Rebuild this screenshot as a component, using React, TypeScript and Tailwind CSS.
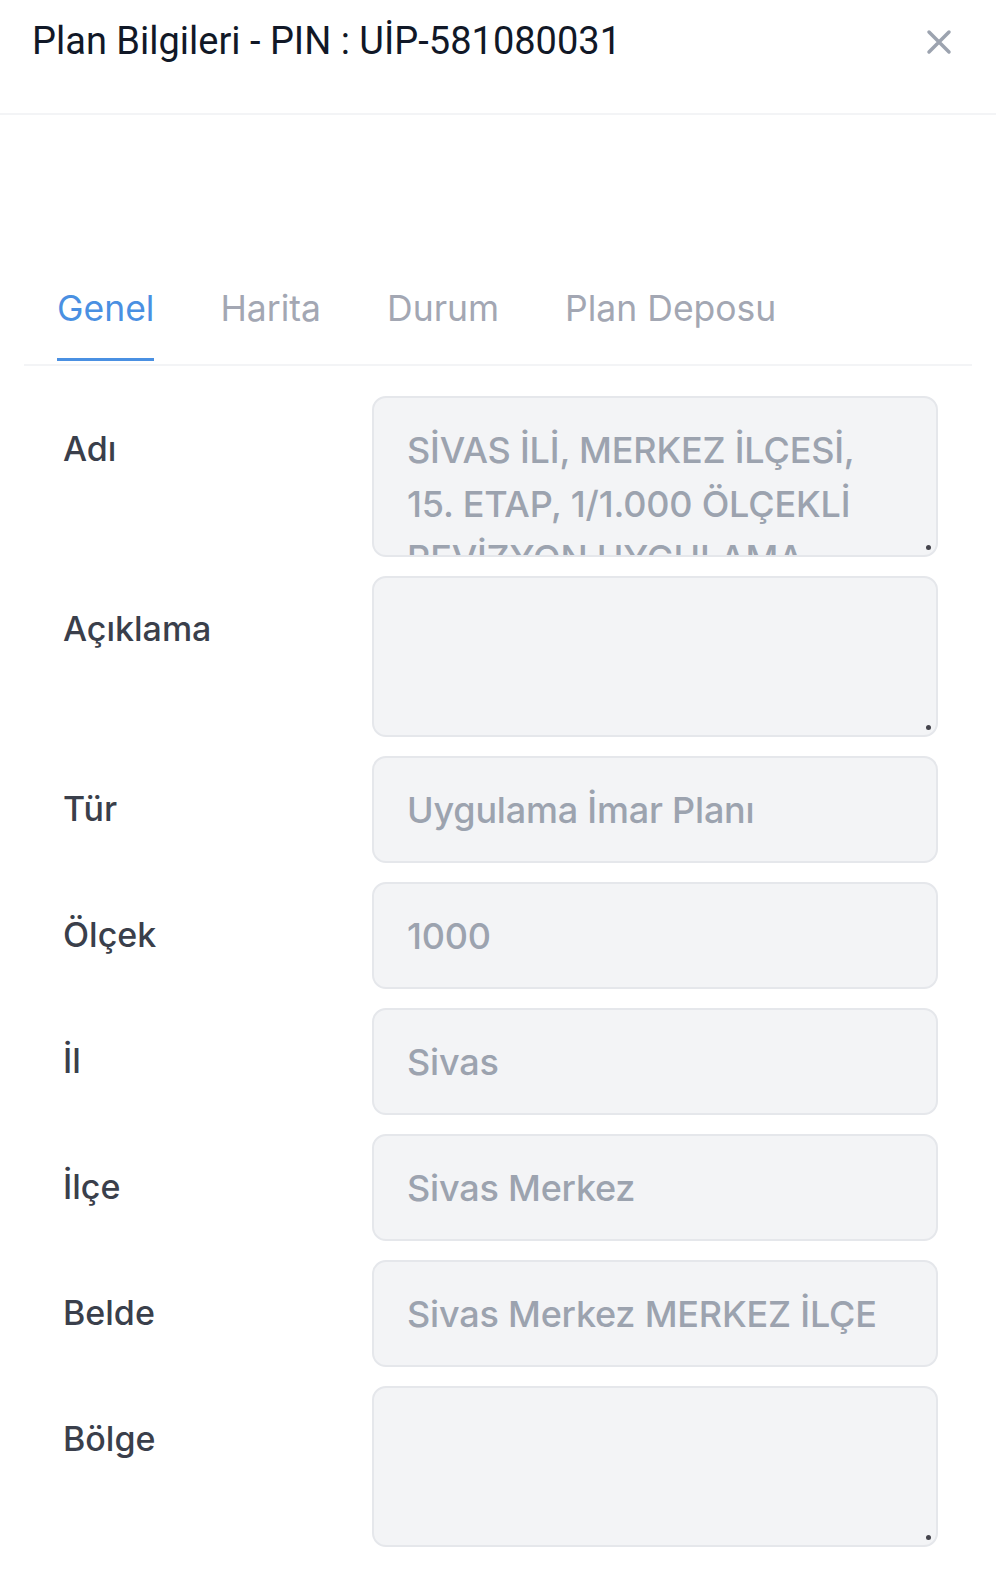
import React from 'react'

type Field = {
  label: string
  value?: string[]
  multi?: boolean
}

const fields: Field[] = [
  {
    label: 'Adı',
    multi: true,
    value: ['SİVAS İLİ, MERKEZ İLÇESİ,', '15. ETAP, 1/1.000 ÖLÇEKLİ', 'REVİZYON UYGULAMA', 'İMAR PLANI'],
  },
  { label: 'Açıklama', multi: true, value: [] },
  { label: 'Tür', value: ['Uygulama İmar Planı'] },
  { label: 'Ölçek', value: ['1000'] },
  { label: 'İl', value: ['Sivas'] },
  { label: 'İlçe', value: ['Sivas Merkez'] },
  { label: 'Belde', value: ['Sivas Merkez MERKEZ İLÇE'] },
  { label: 'Bölge', multi: true, value: [] },
]

const tabs = ['Genel', 'Harita', 'Durum', 'Plan Deposu']

function Grip() {
  return (
    <span className="absolute right-[5px] bottom-[5px] w-[5px] h-[5px] rounded-full bg-[#44444c]" />
  )
}

function FieldBox({ field }: { field: Field }) {
  if (field.multi) {
    return (
      <div className="relative flex-1 h-[161px] rounded-[14px] border-2 border-[#e5e7eb] bg-[#f3f4f6] overflow-hidden">
        <div className="px-[33px] pt-[25px] text-[36px] font-medium leading-[54px] text-[#9ca3af] tracking-[-0.2px]">
          {field.value?.map((line) => (
            <div key={line} className="whitespace-nowrap">
              {line}
            </div>
          ))}
        </div>
        <Grip />
      </div>
    )
  }
  return (
    <div className="flex-1 h-[107px] rounded-[14px] border-2 border-[#e5e7eb] bg-[#f3f4f6] flex items-center px-[33px]">
      <span className="text-[36px] font-medium text-[#9ca3af] tracking-[-0.2px] whitespace-nowrap">
        {field.value?.[0]}
      </span>
    </div>
  )
}

export default function App() {
  return (
    <div
      className="w-[996px] min-h-[1579px] bg-white"
      style={{ fontFamily: 'Inter, "Noto Sans", sans-serif' }}
    >
      {/* header */}
      <div className="h-[115px] border-b-2 border-[#f3f4f6] flex items-start justify-between pl-[32px] pr-[44px] pt-[16px]">
        <h1
          className="text-[38px] leading-[50px] text-[#111827]"
          style={{ fontFamily: 'Roboto, Inter, sans-serif' }}
        >
          Plan Bilgileri - PIN : UİP-581080031
        </h1>
        <svg width="26" height="26" viewBox="0 0 26 26" className="mt-[13px]">
          <path d="M3 3 L23 23 M23 3 L3 23" stroke="#9ca3af" strokeWidth="3.5" strokeLinecap="round" />
        </svg>
      </div>

      {/* tabs */}
      <div className="pt-[172px] px-[24px]">
        <div className="flex gap-[66px] pl-[33px] pb-[3px] border-b-2 border-[#f3f4f6]">
          {tabs.map((t, i) => (
            <div
              key={t}
              className={
                i === 0
                  ? 'pb-[27px] text-[35.5px] leading-[44px] text-[#4a90e2] border-b-[3px] border-[#4a90e2]'
                  : 'pb-[27px] text-[35.5px] leading-[44px] text-[#a3a7b3] border-b-[3px] border-transparent'
              }
            >
              {t}
            </div>
          ))}
        </div>
      </div>

      {/* form */}
      <div className="pt-[30px] pl-[63px] pr-[58px] flex flex-col gap-[19px]">
        {fields.map((f) => (
          <div key={f.label} className="flex items-start">
            <div className="w-[309px] pt-[33px] text-[34px] font-medium leading-[40px] text-[#3a3f4b]">
              {f.label}
            </div>
            <FieldBox field={f} />
          </div>
        ))}
      </div>
    </div>
  )
}
